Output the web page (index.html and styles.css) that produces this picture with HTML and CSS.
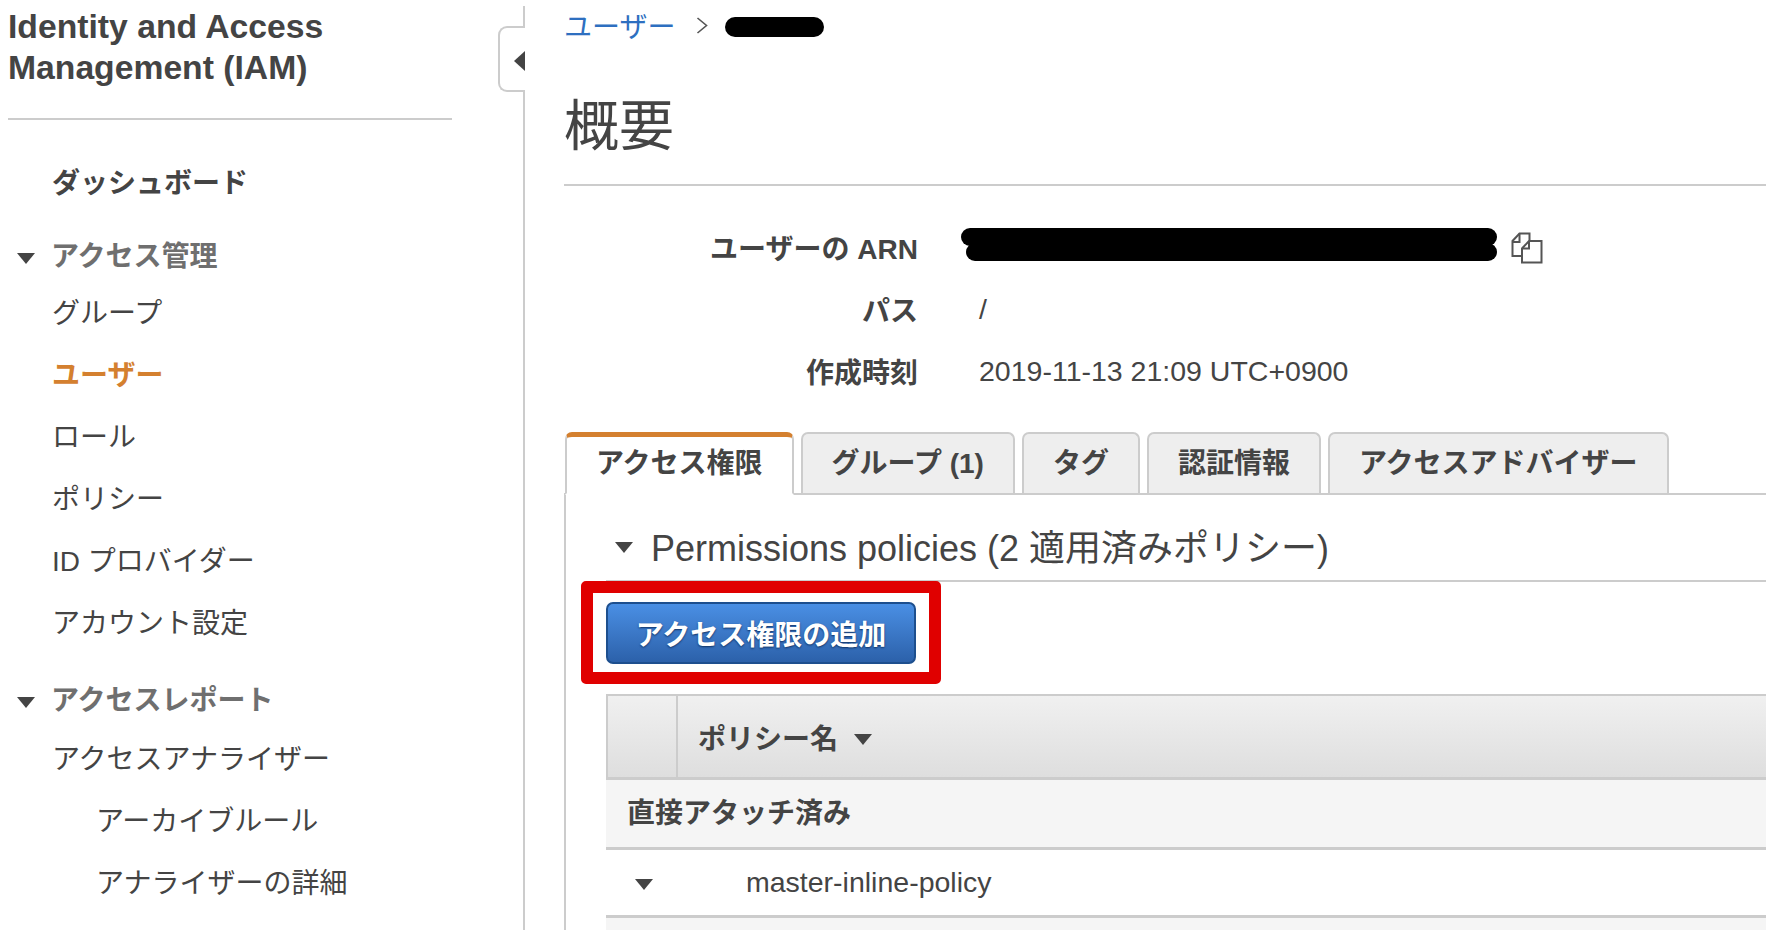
FILE: index.html
```html
<!DOCTYPE html>
<html lang="ja">
<head>
    <meta charset="UTF-8">
    <meta name="viewport" content="width=device-width, initial-scale=1.0">
    <title>Identity and Access Management (IAM)</title>
    <link rel="stylesheet" href="styles.css">
</head>
<body>
    <aside class="sidebar">
        <h2 class="side-title">Identity and Access Management (IAM)</h2>
        <button class="side-toggle" aria-label="collapse"><span class="toggle-arrow"></span></button>
        <nav class="side-nav">
            <a class="nav-top">ダッシュボード</a>
            <div class="nav-head nav-head-first"><span class="caret"></span>アクセス管理</div>
            <a class="nav-item">グループ</a>
            <a class="nav-item active">ユーザー</a>
            <a class="nav-item">ロール</a>
            <a class="nav-item">ポリシー</a>
            <a class="nav-item">ID プロバイダー</a>
            <a class="nav-item">アカウント設定</a>
            <div class="nav-head nav-head-second"><span class="caret"></span>アクセスレポート</div>
            <a class="nav-item">アクセスアナライザー</a>
            <a class="nav-item nav-sub">アーカイブルール</a>
            <a class="nav-item nav-sub">アナライザーの詳細</a>
        </nav>
    </aside>

    <main class="content">
        <div class="breadcrumb">
            <a class="crumb-link">ユーザー</a>
            <svg class="crumb-chevron" width="12" height="17" viewBox="0 0 12 17"><path d="M1.5 1l9 7.5-9 7.5" fill="none" stroke="#555" stroke-width="1.6"/></svg>
            <span class="redact redact-name"></span>
        </div>

        <h1 class="page-title">概要</h1>

        <section class="details">
            <div class="detail-row">
                <div class="detail-label">ユーザーの ARN</div>
                <div class="detail-value">
                    <span class="redact-arn"><span class="redact arn-top"></span><span class="redact arn-bottom"></span></span>
                    <svg class="copy-icon" width="32" height="32" viewBox="0 0 32 32" fill="none" stroke="#555" stroke-width="2">
                        <path d="M10 24H1.5V9L8.5 1.5H18.5V8.5"/>
                        <path d="M1.5 10H8.5V1.5"/>
                        <path d="M18 9H30.5V30.5H11V16.5Z"/>
                        <path d="M11 16.5H18V9"/>
                    </svg>
                </div>
            </div>
            <div class="detail-row">
                <div class="detail-label">パス</div>
                <div class="detail-value">/</div>
            </div>
            <div class="detail-row">
                <div class="detail-label">作成時刻</div>
                <div class="detail-value">2019-11-13 21:09 UTC+0900</div>
            </div>
        </section>

        <div class="tabs">
            <div class="tab tab-active">アクセス権限</div>
            <div class="tab">グループ (1)</div>
            <div class="tab">タグ</div>
            <div class="tab">認証情報</div>
            <div class="tab">アクセスアドバイザー</div>
        </div>

        <section class="panel">
            <div class="panel-head"><span class="caret"></span>Permissions policies (2 適用済みポリシー)</div>

            <div class="highlight-box">
                <button class="add-btn">アクセス権限の追加</button>
            </div>

            <div class="policy-table">
                <div class="table-head">
                    <div class="head-blank"></div>
                    <div class="head-name">ポリシー名<span class="caret"></span></div>
                </div>
                <div class="group-row">直接アタッチ済み</div>
                <div class="policy-row"><span class="caret"></span><span class="policy-name">master-inline-policy</span></div>
                <div class="next-row"></div>
            </div>
        </section>
    </main>
</body>
</html>
```

FILE: styles.css
```css
* {
    box-sizing: border-box;
}
html, body {
    height: 930px;
    overflow: hidden;
}
body {
    margin: 0;
    display: flex;
    background-color: #ffffff;
    color: #444444;
    font-family: "Liberation Sans", "Noto Sans CJK JP", sans-serif;
    font-size: 28px;
}
.caret {
    display: inline-block;
    width: 0;
    height: 0;
    flex-shrink: 0;
    border-left: 9.5px solid transparent;
    border-right: 9.5px solid transparent;
    border-top: 11px solid #444444;
}

/* sidebar */
.sidebar {
    position: relative;
    width: 525px;
    flex-shrink: 0;
    margin-top: 6px;
    padding-right: 71px;
    border-right: 2px solid #cccccc;
}
.side-title {
    margin: 0 0 0 8px;
    padding: 0 0 18px;
    font-size: 33.7px;
    line-height: 41px;
    font-weight: bold;
    color: #444444;
    border-bottom: 2px solid #cccccc;
    height: 114px;
}
.side-toggle {
    position: absolute;
    top: 20px;
    right: -2px;
    width: 27px;
    height: 66px;
    padding: 0;
    background: #ffffff;
    border: 2px solid #cccccc;
    border-right: none;
    border-radius: 9px 0 0 9px;
}
.toggle-arrow {
    position: absolute;
    top: 23px;
    right: 0;
    width: 0;
    height: 0;
    border-top: 10px solid transparent;
    border-bottom: 10px solid transparent;
    border-right: 11px solid #444444;
}
.side-nav {
    display: flex;
    flex-direction: column;
    margin-top: 33px;
}
.nav-top, .nav-item {
    height: 62px;
    line-height: 62px;
    padding-left: 52px;
    white-space: nowrap;
}
.nav-top {
    font-weight: bold;
}
.nav-item.active {
    color: #d4802f;
    font-weight: bold;
}
.nav-sub {
    padding-left: 96px;
}
.nav-head {
    display: flex;
    align-items: center;
    gap: 16px;
    height: 50px;
    padding-left: 17px;
    color: #6f6f6f;
    font-weight: bold;
    white-space: nowrap;
}
.nav-head .caret {
    margin-top: 8px;
}
.nav-head-first {
    margin: 14px 0 4px;
}
.nav-head-second {
    margin: 18px 0 6px;
}

/* main area */
.content {
    flex: 1;
    min-width: 0;
    padding-left: 39px;
}
.breadcrumb {
    display: flex;
    align-items: center;
    height: 50px;
}
.crumb-link {
    color: #2e6fc0;
}
.crumb-chevron {
    margin-left: 21px;
}
.redact {
    display: block;
    background-color: #000000;
    border-radius: 10px;
}
.redact-name {
    width: 99px;
    height: 20px;
    margin: 4px 0 0 17px;
}
.page-title {
    margin: 0;
    padding-top: 17px;
    height: 136px;
    font-size: 55px;
    line-height: 118px;
    font-weight: normal;
    color: #444444;
    border-bottom: 2px solid #cccccc;
}
.details {
    margin-top: 30px;
}
.detail-row {
    display: grid;
    grid-template-columns: 354px 1fr;
    column-gap: 61px;
    height: 62px;
    align-items: center;
}
.detail-label {
    text-align: right;
    font-weight: bold;
}
.detail-value {
    display: flex;
    align-items: center;
    font-size: 28.5px;
}
.redact-arn {
    display: flex;
    flex-direction: column;
    align-items: flex-end;
    width: 536px;
    margin: 0 0 6px -18px;
}
.arn-top {
    width: 536px;
    height: 18px;
}
.arn-bottom {
    width: 531px;
    height: 18px;
    margin-top: -3px;
}
.copy-icon {
    margin: 2px 0 0 14px;
}

/* tabs */
.tabs {
    display: flex;
    gap: 7px;
    height: 63px;
    margin-top: 30px;
    padding-left: 1px;
    border-bottom: 2px solid #cccccc;
}
.tab {
    height: 61px;
    line-height: 60px;
    padding: 0 29px;
    font-weight: bold;
    white-space: nowrap;
    background-color: #eeeeee;
    border: 2px solid #cccccc;
    border-bottom: none;
    border-radius: 7px 7px 0 0;
}
.tab-active {
    height: 63px;
    line-height: 54px;
    background-color: #ffffff;
    border-top: 5px solid #d4802f;
    border-bottom: 2px solid #ffffff;
}

/* permissions panel */
.panel {
    height: 436px;
    padding-left: 40px;
    border-left: 2px solid #cccccc;
}
.panel-head {
    display: flex;
    align-items: center;
    gap: 18px;
    height: 87px;
    padding-left: 9px;
    padding-top: 14px;
    font-size: 36px;
    white-space: nowrap;
    border-bottom: 2px solid #cccccc;
}
.panel-head .caret {
    margin-top: 6px;
}
.highlight-box {
    width: 360px;
    height: 103px;
    margin: -1px 0 0 -25px;
    padding: 9px 13px;
    border: 12px solid #e00000;
    border-radius: 5px;
    background-color: #ffffff;
    position: relative;
}
.add-btn {
    display: block;
    width: 310px;
    height: 62px;
    padding: 0;
    font-family: inherit;
    font-size: 28px;
    font-weight: bold;
    color: #ffffff;
    text-shadow: 0 1px 2px #0f3264;
    background: linear-gradient(#4a8fe4, #2c61aa);
    border: 2px solid #1d4f8e;
    border-radius: 7px;
}
.policy-table {
    margin-top: 10px;
}
.table-head {
    display: flex;
    height: 86px;
    background: linear-gradient(#f0f0f0, #dedede);
    border: 2px solid #cccccc;
    border-bottom-width: 3px;
    border-right: none;
}
.head-blank {
    width: 70px;
    border-right: 2px solid #cccccc;
}
.head-name {
    display: flex;
    align-items: center;
    gap: 16px;
    padding-left: 20px;
    font-weight: bold;
}
.head-name .caret {
    margin-top: 6px;
}
.group-row {
    height: 70px;
    line-height: 68px;
    padding-left: 21px;
    font-weight: bold;
    background-color: #f5f5f5;
    border-bottom: 3px solid #cccccc;
}
.policy-row {
    display: flex;
    align-items: center;
    height: 68px;
    padding-left: 29px;
    border-bottom: 3px solid #cccccc;
}
.policy-row .caret {
    margin-top: 4px;
}
.policy-name {
    margin-left: 93px;
    font-size: 28.5px;
}
.next-row {
    height: 20px;
    background-color: #f5f5f5;
}
```
